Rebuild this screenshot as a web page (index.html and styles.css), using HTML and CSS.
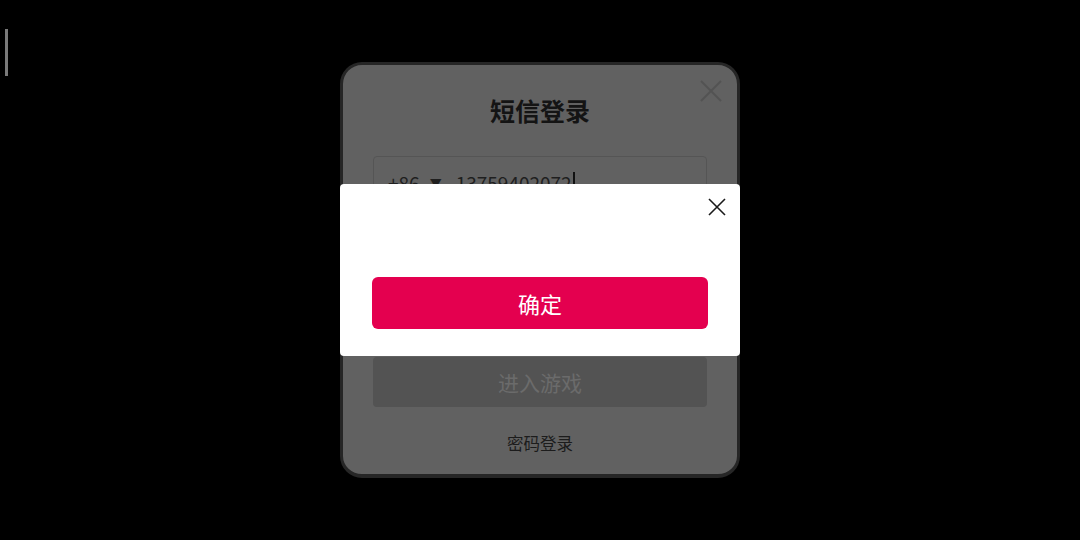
FILE: index.html
```html
<!DOCTYPE html>
<html lang="zh-CN">
<head>
  <meta charset="UTF-8">
  <meta name="viewport" content="width=device-width, initial-scale=1">
  <title>短信登录</title>
  <link rel="stylesheet" href="styles.css">
</head>
<body>
<div class="edge-bar"></div>

<div class="login-card">
  <svg class="card-close" width="24" height="24" viewBox="0 0 24 24">
    <path d="M2 2 L22 22 M22 2 L2 22" stroke="#535353" stroke-width="2" fill="none" />
  </svg>

  <h2 class="login-title">短信登录</h2>

  <div class="field">
    <span class="area-code">+86</span>
    <span class="area-arrow">▼</span>
    <span class="phone">13759402072</span><span class="caret"></span>
  </div>

  <div class="field code-field">
    <span class="placeholder">请输入验证码</span>
    <span class="get-code">获取验证码</span>
  </div>

  <button class="btn-enter">进入游戏</button>

  <p class="switch-link">密码登录</p>
</div>

<div class="dialog-layer">
  <div class="dialog">
    <svg class="dialog-close" width="18" height="18" viewBox="0 0 18 18">
      <path d="M1 1 L17 17 M17 1 L1 17" stroke="#1a1a1a" stroke-width="1.6" fill="none" />
    </svg>
    <div class="dialog-body"></div>
    <button class="btn-confirm">确定</button>
  </div>
</div>
</body>
</html>
```

FILE: styles.css
```css
body {
  display: flex;
  justify-content: center;
  align-items: flex-start;

  height: 540px;
  margin: 0;
  padding-top: 62px;
  box-sizing: border-box;

  background: #000000;
  font-family: 'Noto Sans CJK SC', 'Noto Sans', sans-serif;
  color: #1c1c1c;
}

.edge-bar {
  position: fixed;
  left: 5px;
  top: 29px;
  width: 3px;
  height: 47px;
  background: #7a7a7a;
}

.login-card {
  position: relative;
  width: 400px;
  height: 416px;
  box-sizing: border-box;
  padding: 27px 30px 0 30px;

  background: #616161;
  border: 3px solid #262626;
  border-bottom-width: 4px;
  border-radius: 22px;
  text-align: center;
}

.card-close {
  position: absolute;
  top: 14px;
  right: 14px;
}

.login-title {
  margin: 0;
  font-size: 25px;
  line-height: 36px;
  font-weight: 700;
  color: #141414;
}

.field {
  display: flex;
  align-items: center;
  height: 52px;
  margin-top: 28px;
  padding: 0 14px;
  box-sizing: border-box;

  border: 1px solid #555555;
  border-radius: 4px;
  font-size: 19px;
  color: #1f1f1f;
}

.area-arrow {
  margin-left: 10px;
  font-size: 12px;
}

.phone {
  margin-left: 14px;
}

.caret {
  width: 2px;
  height: 20px;
  margin-left: 1px;
  background: #111111;
}

.code-field {
  justify-content: space-between;
  margin-top: 16px;
  font-size: 16px;
}

.placeholder {
  color: #4a4a4a;
}

.btn-enter {
  display: block;
  width: 100%;
  height: 50px;
  margin-top: 81px;

  background: #535353;
  border: 0;
  border-radius: 4px;
  font-family: inherit;
  font-size: 21px;
  color: #6b6b6b;
}

.switch-link {
  margin: 24px 0 0;
  font-size: 16.5px;
  line-height: 24px;
  color: #1c1c1c;
}

.dialog-layer {
  position: fixed;
  inset: 0;
  display: flex;
  justify-content: center;
  align-items: flex-start;
  padding-top: 184px;
}

.dialog {
  position: relative;
  width: 400px;
  height: 172px;
  box-sizing: border-box;
  padding: 93px 32px 0;

  background: #ffffff;
  border-radius: 4px;
}

.dialog-close {
  position: absolute;
  top: 14px;
  right: 14px;
}

.btn-confirm {
  display: block;
  width: 100%;
  height: 52px;

  background: #e4004f;
  border: 0;
  border-radius: 6px;
  font-family: inherit;
  font-size: 22px;
  color: #ffffff;
}
```
